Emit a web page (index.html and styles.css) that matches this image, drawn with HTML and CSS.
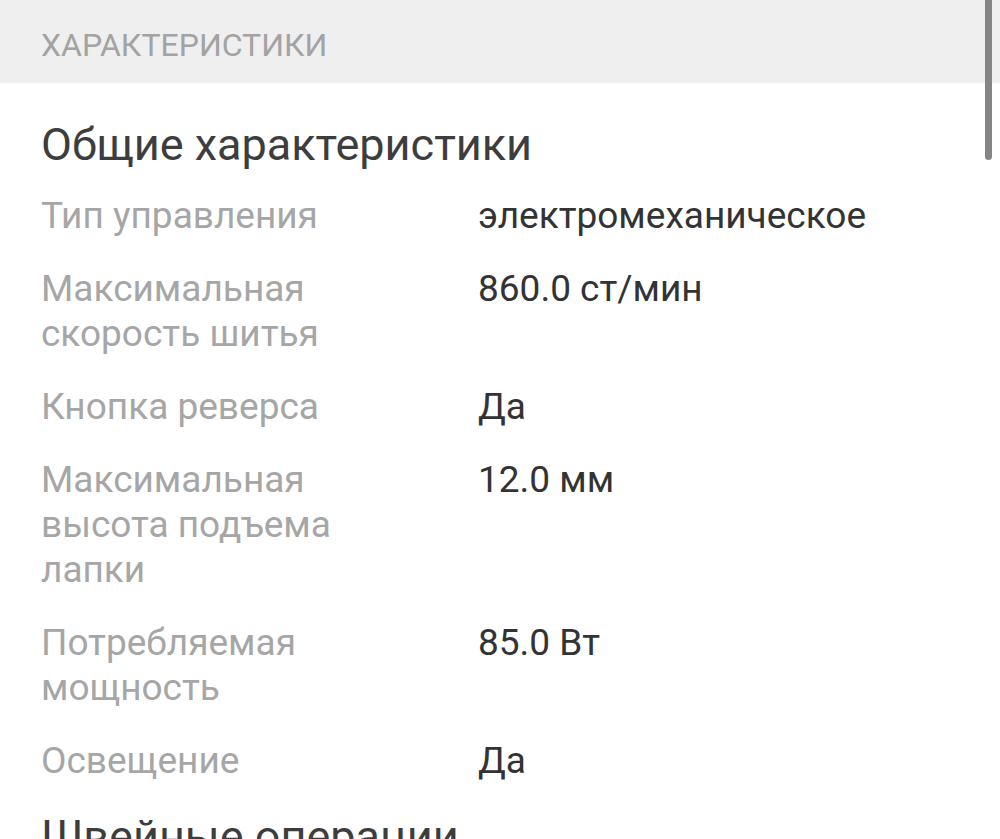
FILE: index.html
```html
<!DOCTYPE html>
<html lang="ru">
<head>
<meta charset="utf-8">
<link rel="stylesheet" href="styles.css">
</head>
<body>
<div class="page">
  <div class="section-header">ХАРАКТЕРИСТИКИ</div>
  <div class="content">
    <h2 class="group-title">Общие характеристики</h2>
    <dl class="specs">
      <dt>Тип управления</dt><dd>электромеханическое</dd>
      <dt>Максимальная скорость шитья</dt><dd>860.0 ст/мин</dd>
      <dt>Кнопка реверса</dt><dd>Да</dd>
      <dt>Максимальная высота подъема лапки</dt><dd>12.0 мм</dd>
      <dt>Потребляемая мощность</dt><dd>85.0 Вт</dd>
      <dt>Освещение</dt><dd>Да</dd>
    </dl>
    <h2 class="group-title next">Швейные операции</h2>
  </div>
  <div class="scrollbar"></div>
</div>
</body>
</html>
```

FILE: styles.css
```css
html, body {
  margin: 0;
  padding: 0;
  background: #ffffff;
}
body {
  font-family: Roboto, "Noto Sans", "Liberation Sans", sans-serif;
  overflow: hidden;
  height: 839px;
}
.page {
  position: relative;
  width: 1000px;
  height: 839px;
  overflow: hidden;
}
.section-header {
  height: 83px;
  box-sizing: border-box;
  padding-left: 41px;
  padding-top: 7px;
  display: flex;
  align-items: center;
  background: #efefef;
  color: #a3a3a3;
  font-size: 32px;
}
.content {
  padding: 0 41px;
}
.group-title {
  margin: 0;
  padding-top: 36px;
  font-size: 45px;
  font-weight: 400;
  line-height: 52px;
  color: #3d3d3d;
}
.specs {
  margin: 22px 0 0;
  display: grid;
  grid-template-columns: 360px 1fr;
  column-gap: 77px;
  row-gap: 28px;
  font-size: 37px;
  line-height: 45px;
}
.specs dt {
  color: #a6a6a6;
}
.specs dd {
  margin: 0;
  color: #333333;
}
.group-title.next {
  padding-top: 28px;
}
.scrollbar {
  position: absolute;
  top: 0;
  right: 8px;
  width: 7px;
  height: 160px;
  background: #858585;
  border-radius: 0 0 4px 4px;
}
```
